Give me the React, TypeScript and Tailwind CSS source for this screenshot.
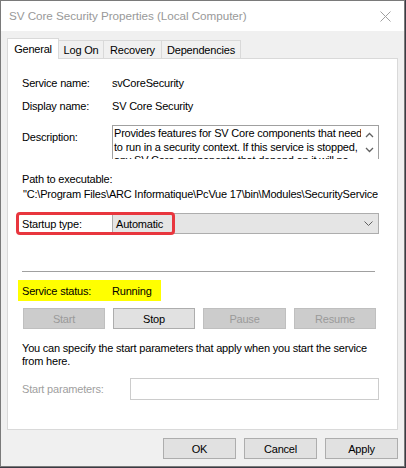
import React from "react";

const Btn = ({ label, disabled, w }: { label: string; disabled?: boolean; w: string }) => (
  <div
    className={
      "h-[21px] flex items-center justify-center border " +
      w +
      " " +
      (disabled ? "bg-[#cccccc] border-[#bfbfbf] text-[#9a9a9a]" : "bg-[#e1e1e1] border-[#adadad] text-black")
    }
  >
    {label}
  </div>
);

export default function App() {
  return (
    <div className="w-[406px] h-[468px] bg-[#3b3b44] overflow-hidden font-['Liberation_Sans',Arial,sans-serif] text-[11px] tracking-[-0.2px] text-black leading-[14px]">
      <div className="w-[405px] h-[467px] border border-[#7a7a7a] bg-[#f0f0f0] flex flex-col">
        {/* Title bar */}
        <div className="h-[30px] bg-white flex items-center justify-between pl-[8px] pr-[9px] shrink-0">
          <span className="text-[11.7px] tracking-[-0.05px] text-[#999999]">SV Core Security Properties (Local Computer)</span>
          <svg width="11" height="11" viewBox="0 0 11 11" className="mr-[4px]">
            <path d="M0.5 0.5 L10.5 10.5 M10.5 0.5 L0.5 10.5" stroke="#a0a0a0" strokeWidth="1" />
          </svg>
        </div>

        {/* Tabs */}
        <div className="relative h-[27px] pl-[6px] flex items-end shrink-0">
          <div className="relative z-10 w-[52px] h-[21px] bg-white border border-[#d9d9d9] border-b-0 flex items-center justify-center -mb-px pb-[1px]">
            General
          </div>
          <div className="w-[45px] h-[18px] bg-[#f0f0f0] border border-[#d9d9d9] border-l-0 border-b-0 flex items-center justify-center">
            Log On
          </div>
          <div className="w-[58px] h-[18px] bg-[#f0f0f0] border border-[#d9d9d9] border-l-0 border-b-0 flex items-center justify-center">
            Recovery
          </div>
          <div className="w-[79px] h-[18px] bg-[#f0f0f0] border border-[#d9d9d9] border-l-0 border-b-0 flex items-center justify-center">
            Dependencies
          </div>
        </div>

        {/* Panel */}
        <div className="relative ml-[6px] w-[391px] h-[372px] bg-white border border-[#d9d9d9] shrink-0 pl-[14px]">
          <div className="mt-[17px] h-[14px] flex">
            <div className="w-[90px]">Service name:</div>
            <div>svCoreSecurity</div>
          </div>
          <div className="mt-[9px] h-[14px] flex">
            <div className="w-[90px]">Display name:</div>
            <div>SV Core Security</div>
          </div>
          <div className="mt-[12px] flex">
            <div className="w-[90px] pt-[5px]">Description:</div>
            <div className="w-[267px] h-[34px] border border-[#a0a0a0] border-b-0 flex overflow-hidden">
              <div className="flex-1 pl-[1px] pt-[1px] leading-[13.5px] overflow-hidden whitespace-nowrap">
                <div>Provides features for SV Core components that need</div>
                <div>to run in a security context. If this service is stopped,</div>
                <div>any SV Core components that depend on it will no</div>
              </div>
              <div className="w-[17px] flex flex-col items-center pt-[6px]">
                <svg width="9" height="6" viewBox="0 0 9 6">
                  <path d="M1 5 L4.5 1.5 L8 5" fill="none" stroke="#606060" strokeWidth="1.3" />
                </svg>
                <svg width="9" height="6" viewBox="0 0 9 6" className="mt-[9px]">
                  <path d="M1 1 L4.5 4.5 L8 1" fill="none" stroke="#606060" strokeWidth="1.3" />
                </svg>
              </div>
            </div>
          </div>
          <div className="mt-[13px] h-[14px]">Path to executable:</div>
          <div className="mt-[1px] h-[14px] pl-[1px] w-[356px] overflow-hidden whitespace-nowrap">
            "C:\Program Files\ARC Informatique\PcVue 17\bin\Modules\SecurityService.exe"
          </div>

          <div className="relative mt-[12px] h-[21px] flex items-center">
            <div className="w-[90px]">Startup type:</div>
            <div className="w-[267px] h-[21px] bg-[#e5e5e5] border border-[#adadad] flex items-center justify-between pl-[3px] pr-[5px]">
              <span>Automatic</span>
              <svg width="9" height="5" viewBox="0 0 9 5">
                <path d="M0.5 0.5 L4.5 4.5 L8.5 0.5" fill="none" stroke="#606060" strokeWidth="1" />
              </svg>
            </div>
            <div className="absolute left-[-6px] top-[-1px] w-[159px] h-[23px] border-[3px] border-[#e8363e] rounded-[4px] pointer-events-none" />
          </div>

          <div className="mt-[37px] h-px w-[353px] bg-[#a0a0a0]" />

          <div className="mt-[8px] h-[21px] w-[143px] -ml-[4px] pl-[4px] bg-[#ffff00] flex items-center">
            <div className="w-[90px]">Service status:</div>
            <div>Running</div>
          </div>

          <div className="mt-[7px] flex pl-[1px] gap-[8px]">
            <Btn label="Start" disabled w="w-[82px]" />
            <Btn label="Stop" w="w-[82px]" />
            <Btn label="Pause" disabled w="w-[83px]" />
            <Btn label="Resume" disabled w="w-[82px]" />
          </div>

          <div className="mt-[13px] leading-[12.5px]">
            You can specify the start parameters that apply when you start the service
            <br />
            from here.
          </div>

          <div className="mt-[11px] flex items-center">
            <div className="w-[108px] text-[#a0a0a0]">Start parameters:</div>
            <div className="w-[249px] h-[22px] border border-[#cccccc] bg-white" />
          </div>
        </div>

        <div className="mt-[8px] flex justify-end pr-[6px] gap-[8px]">
          <Btn label="OK" w="w-[73px]" />
          <Btn label="Cancel" w="w-[73px]" />
          <Btn label="Apply" w="w-[73px]" />
        </div>
      </div>
    </div>
  );
}
